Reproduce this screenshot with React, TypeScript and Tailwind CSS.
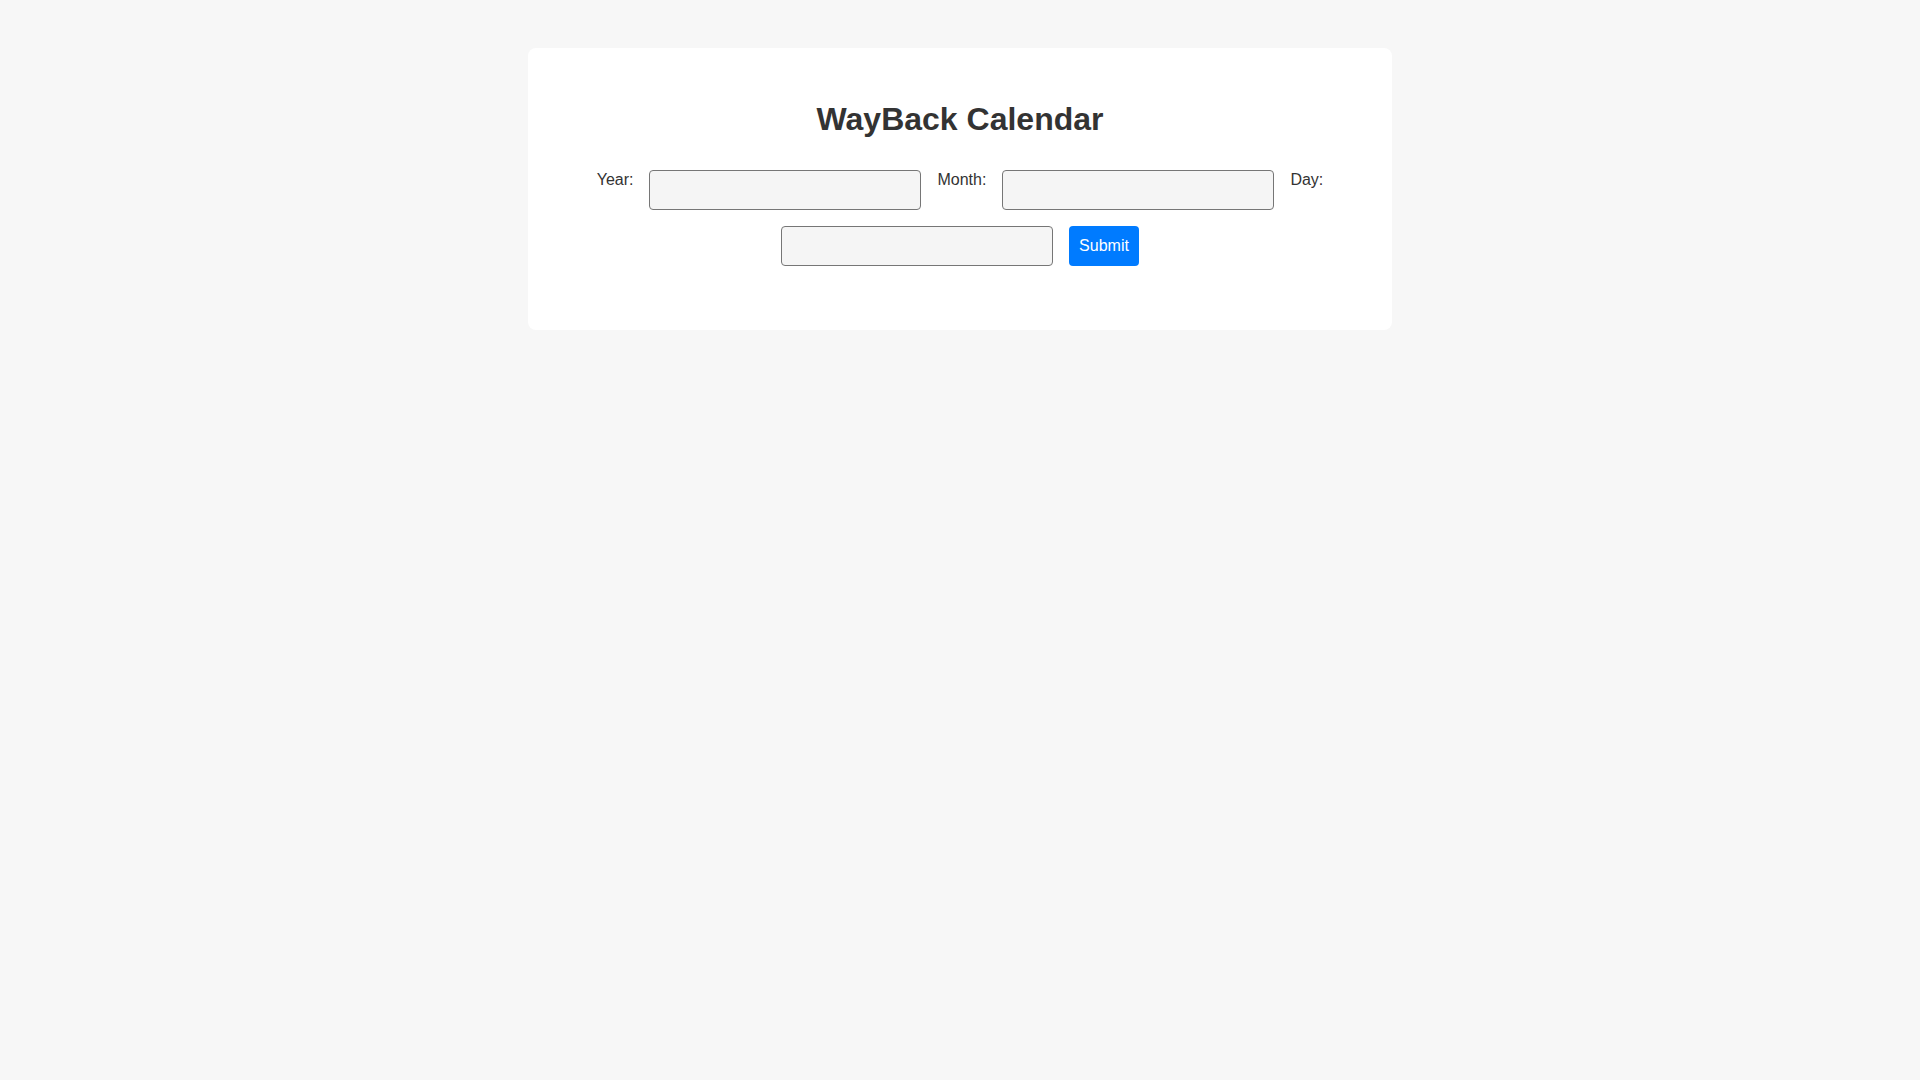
export default function App() {
  return (
    <main className="min-h-screen bg-[#f7f7f7] pt-12 font-['Liberation_Sans',Arial,sans-serif] text-[#333]">
      <div className="mx-auto w-[864px] rounded-lg bg-white p-8">
        {/* Title */}
        <h1 className="mt-[21px] text-center text-[32px] font-bold leading-[37px] text-[#333]">
          WayBack Calendar
        </h1>

        {/* Date form */}
        <form
          className="mt-[30px] mb-[32px] flex flex-wrap items-start justify-center gap-x-4 gap-y-[14px]"
          onSubmit={(e) => e.preventDefault()}
        >
          <label htmlFor="year" className="pt-[3px] text-base leading-[18px] text-[#333]">
            Year:
          </label>
          <input
            id="year"
            type="text"
            className="mt-[2px] h-10 w-[272px] rounded-[4px] border border-[#767676] bg-[#f5f5f5] px-2"
          />
          <label htmlFor="month" className="pt-[3px] text-base leading-[18px] text-[#333]">
            Month:
          </label>
          <input
            id="month"
            type="text"
            className="mt-[2px] h-10 w-[272px] rounded-[4px] border border-[#767676] bg-[#f5f5f5] px-2"
          />
          <label htmlFor="day" className="pt-[3px] text-base leading-[18px] text-[#333]">
            Day:
          </label>
          <input
            id="day"
            type="text"
            className="mt-[2px] h-10 w-[272px] rounded-[4px] border border-[#767676] bg-[#f5f5f5] px-2"
          />
          <button
            type="submit"
            className="mt-[2px] h-10 w-[70px] rounded-[4px] bg-[#007bff] text-base text-white"
          >
            Submit
          </button>
        </form>
      </div>
    </main>
  )
}
